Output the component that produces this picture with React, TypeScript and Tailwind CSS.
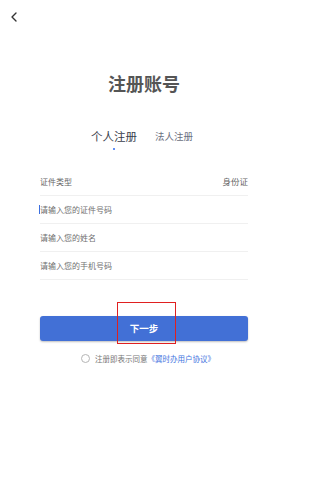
import React, { useState } from 'react';
import { ChevronLeft } from 'lucide-react';

const FONT = { fontFamily: '"Noto Sans CJK SC", "Noto Sans", sans-serif' };

const FIELDS = [
    { id: 'idNo', placeholder: '请输入您的证件号码', focused: true },
    { id: 'name', placeholder: '请输入您的姓名' },
    { id: 'phone', placeholder: '请输入您的手机号码' },
];

export default function App() {
    const [tab, setTab] = useState<'personal' | 'legal'>('personal');
    const [agreed, setAgreed] = useState(false);

    return (
        <div className="relative w-[288px] h-[500px] bg-white text-[#555]" style={FONT}>
            {/* back */}
            <div className="h-[25px] pt-[9px] pl-[6px]">
                <ChevronLeft size={16} strokeWidth={2} className="text-[#333]" />
            </div>

            <h1 className="mt-[49px] text-center text-[18px] leading-[18px] font-bold text-[#555]">
                注册账号
            </h1>

            {/* tabs */}
            <div className="mt-[38px] flex items-end gap-[18px] pl-[91px]">
                <button
                    type="button"
                    onClick={() => setTab('personal')}
                    className="flex flex-col items-center"
                >
                    <span className={`text-[11.5px] leading-[12px] ${tab === 'personal' ? 'text-[#3a3e4c]' : 'text-[#777]'}`}>
                        个人注册
                    </span>
                    <span className={`mt-[6px] w-[2px] h-[2px] rounded-full ${tab === 'personal' ? 'bg-[#2f6bf0]' : 'bg-transparent'}`} />
                </button>
                <button
                    type="button"
                    onClick={() => setTab('legal')}
                    className="flex flex-col items-center"
                >
                    <span className={`text-[9.5px] leading-[12px] ${tab === 'legal' ? 'text-[#3a3e4c]' : 'text-[#6b7080]'}`}>
                        法人注册
                    </span>
                    <span className={`mt-[6px] w-[2px] h-[2px] rounded-full ${tab === 'legal' ? 'bg-[#2f6bf0]' : 'bg-transparent'}`} />
                </button>
            </div>

            {/* form */}
            <div className="mt-[18px] mx-[40px]">
                <div className="h-[28px] flex items-center justify-between border-b border-[#f0f0f0]">
                    <span className="text-[8px] text-[#666]">证件类型</span>
                    <span className="text-[8.5px] text-[#666]">身份证</span>
                </div>
                {FIELDS.map((f) => (
                    <div key={f.id} className="relative h-[28px] flex items-center border-b border-[#f0f0f0]">
                        {f.focused && <span className="absolute left-[-1px] w-[1px] h-[9px] bg-[#3b6fe0]" />}
                        <input
                            className="w-full bg-transparent outline-none text-[8px] text-[#333] placeholder:text-[#707070]"
                            placeholder={f.placeholder}
                            style={FONT}
                        />
                    </div>
                ))}
            </div>

            {/* next */}
            <div className="mt-[33px] mx-[40px]">
                <button
                    type="button"
                    className="w-full h-[25px] rounded-[3px] bg-[#4270d6] text-white text-[9.5px] font-bold shadow-[0_1px_2px_rgba(0,0,0,0.25)]"
                >
                    下一步
                </button>
            </div>

            {/* agreement */}
            <div className="mt-[13px] flex items-center pl-[81px] h-[10px]">
                <button
                    type="button"
                    onClick={() => setAgreed(!agreed)}
                    className={`w-[9px] h-[9px] rounded-full border ${agreed ? 'border-[#4270d6] bg-[#4270d6]' : 'border-[#b5b5b5]'}`}
                />
                <span className="ml-[5px] text-[7.5px] leading-[10px] text-[#777]">注册即表示同意</span>
                <span className="text-[7.5px] leading-[10px] text-[#3f73e0]">《翼时办用户协议》</span>
            </div>

            {/* annotation box */}
            <div className="absolute left-[117px] top-[302px] w-[59px] h-[42px] border border-[#e02020] pointer-events-none" />
        </div>
    );
}
